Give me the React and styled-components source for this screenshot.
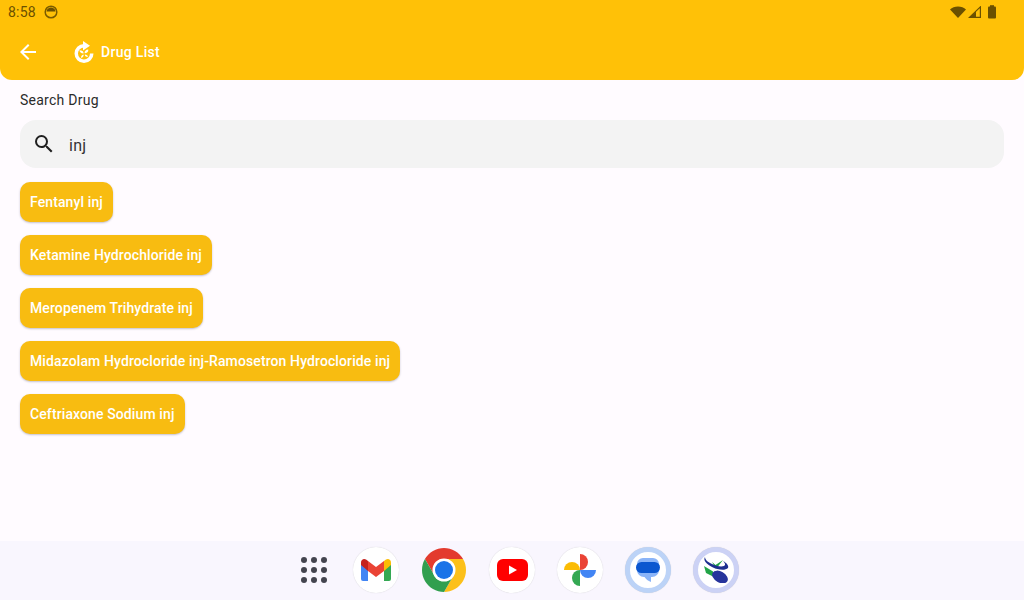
import React from "react";
import styled, { createGlobalStyle } from "styled-components";
import { MdSearch, MdArrowBack } from "react-icons/md";

const GlobalStyle = createGlobalStyle`
  html, body {
    margin: 0;
    padding: 0;
    background: #fffbff;
  }
  * {
    box-sizing: border-box;
  }
`;

const Screen = styled.div`
  width: 1024px;
  height: 600px;
  display: flex;
  flex-direction: column;
  overflow: hidden;
  background: #fffbff;
  font-family: Roboto, "Liberation Sans", sans-serif;
`;

const Header = styled.header`
  height: 80px;
  flex: none;
  display: flex;
  flex-direction: column;
  background: #ffc107;
  border-radius: 0 0 12px 12px;
`;

const StatusBar = styled.div`
  height: 24px;
  display: flex;
  align-items: center;
  padding: 0 27px 0 8px;
  color: #6b5000;
  font-size: 14px;
  letter-spacing: 0.2px;
`;

const Clock = styled.span`
  width: 36px;
`;

const StatusIcons = styled.div`
  margin-left: auto;
  display: flex;
  align-items: center;
  gap: 2px;
`;

const Toolbar = styled.div`
  height: 56px;
  display: flex;
  align-items: center;
  padding-left: 16px;
  color: #fff;
`;

const BackButton = styled.div`
  width: 57px;
  display: flex;
  font-size: 24px;
`;

const Title = styled.span`
  margin-left: 6px;
  font-size: 14px;
  font-weight: 500;
  letter-spacing: 0.3px;
`;

const Main = styled.main`
  flex: 1;
  display: flex;
  flex-direction: column;
  align-items: flex-start;
  padding: 12px 20px 0;
`;

const SearchLabel = styled.label`
  height: 16px;
  line-height: 16px;
  font-size: 14px;
  color: #2b2b2b;
  letter-spacing: 0.25px;
`;

const SearchBox = styled.div`
  width: 984px;
  height: 48px;
  margin-top: 12px;
  display: flex;
  align-items: center;
  padding-left: 12px;
  gap: 13px;
  background: #f3f3f3;
  border-radius: 16px;
  font-size: 24px;
  color: #1f1f1f;
`;

const SearchText = styled.span`
  margin-top: 2px;
  font-size: 16px;
  letter-spacing: 0.3px;
  color: #333;
`;

const DrugList = styled.div`
  margin-top: 14px;
  display: flex;
  flex-direction: column;
  align-items: flex-start;
  gap: 13px;
`;

const DrugChip = styled.div`
  height: 40px;
  display: flex;
  align-items: center;
  padding: 0 10px;
  background: #f8bc11;
  border-radius: 10px;
  box-shadow: 0 1px 2px rgba(60, 60, 90, 0.3);
  color: #fff;
  font-size: 14px;
  font-weight: 500;
  letter-spacing: 0.11px;
`;

const Dock = styled.nav`
  height: 59px;
  flex: none;
  display: flex;
  align-items: center;
  justify-content: center;
  gap: 22px;
  padding-left: 12px;
  padding-bottom: 1px;
  background: #f9f6fe;
`;

const AllApps = styled.div`
  width: 34px;
  height: 46px;
  display: grid;
  grid-template-columns: repeat(3, 6px);
  grid-auto-rows: 6px;
  gap: 4px;
  align-content: center;
  justify-content: center;
`;

const AppDot = styled.span`
  border-radius: 50%;
  background: #44444f;
`;

const AppIcon = styled.div`
  width: 46px;
  height: 46px;
  display: flex;
  align-items: center;
  justify-content: center;
  border-radius: 50%;
  background: #fff;
  border: ${(p) => (p.$ring ? `5px solid ${p.$ring}` : "none")};
  box-shadow: 0 0 1px rgba(0, 0, 0, 0.2);
`;

const BareIcon = styled.div`
  width: 46px;
  height: 46px;
  display: flex;
  align-items: center;
  justify-content: center;
`;

const drugs = [
  "Fentanyl inj",
  "Ketamine Hydrochloride inj",
  "Meropenem Trihydrate inj",
  "Midazolam Hydrocloride inj-Ramosetron Hydrocloride inj",
  "Ceftriaxone Sodium inj",
];

const FaceIcon = () => (
  <svg width="14" height="14" viewBox="0 0 14 14">
    <circle cx="7" cy="7" r="5.8" fill="none" stroke="#7a5c00" strokeWidth="1.5" />
    <path d="M2.5 6.5C3 3.5 5 2.5 7 2.5s4 1 4.500 4z" fill="#6b5000" />
  </svg>
);

const WifiIcon = () => (
  <svg width="16" height="12" viewBox="0 0 16 12">
    <path d="M0 3.4C2 1.4 4.8 0.4 8 0.4s6 1 8 3L8 12z" fill="#6b5000" />
  </svg>
);

const SignalIcon = () => (
  <svg width="13" height="12" viewBox="0 0 13 12">
    <path d="M12.4 0.9V11.4H1.400z" fill="none" stroke="#6b5000" strokeWidth="1.200" />
    <path d="M8 5.500V11.500H1.500z" fill="#6b5000" />
  </svg>
);

const BatteryIcon = () => (
  <svg width="14" height="14" viewBox="0 0 14 14">
    <rect x="5" y="1.400" width="8" height="12" rx="1" fill="#6b5000" />
    <rect x="7" y="0.200" width="4" height="2" fill="#6b5000" />
  </svg>
);

const LeafLogo = () => (
  <svg width="22" height="23" viewBox="0 0 22 23">
    <path d="M11 3a9.500 9.500 0 1 0 9.500 9.500H17a6 6 0 1 1-6-6z" fill="#fff" />
    <path d="M10 0l7 4.800-7 4.800z" fill="#fff" />
    <path d="M11.600 12.200c-.2-2.200 1-3.600 3.700-3.800.2 2.500-1.300 3.800-3.700 3.800z" fill="#fff" />
    <path d="M10.600 12.400C8 12.400 6.600 11.200 6.400 9.200c2.700 0 4.200 1 4.200 3.200z" fill="#fff" />
    <path d="M10.600 13.400c.2 1.800-.7 3-2.500 3.500-.3-1.900.7-3.100 2.500-3.500z" fill="#fff" />
    <path d="M11.800 13.400c1.800 0 3.100.9 3.300 2.400-2 .3-3.300-.7-3.300-2.400z" fill="#fff" />
  </svg>
);

const GmailIcon = () => (
  <svg width="30" height="24" viewBox="0 0 30 24">
    <path d="M0 5v16a2 2 0 0 0 2 2h5V11z" fill="#4285f4" />
    <path d="M23 11v12h5a2 2 0 0 0 2-2V5z" fill="#34a853" />
    <path d="M7 3v10l8 6 8-6V3l-8 6z" fill="#ea4335" />
    <path d="M0 4.500V7l7 6V3L5 1.500C3 0 0 1.400 0 4.500z" fill="#c5221f" />
    <path d="M23 3v10l7-6V4.500c0-3.100-3-4.500-5-3z" fill="#fbbc04" />
  </svg>
);

const ChromeIcon = () => (
  <svg width="44" height="44" viewBox="0 0 44 44">
    <path d="M2.950 11A22 22 0 0 1 41.050 11H22A11 11 0 0 0 12.470 27.500z" fill="#e33b2e" />
    <path d="M41.050 11A22 22 0 0 1 22 44L31.530 27.500A11 11 0 0 0 22 11z" fill="#fcc01a" />
    <path d="M22 44A22 22 0 0 1 2.950 11L12.470 27.500A11 11 0 0 0 31.530 27.500z" fill="#319f4f" />
    <circle cx="22" cy="22" r="11.500" fill="#fff" />
    <circle cx="22" cy="22" r="9" fill="#1a73e8" />
  </svg>
);

const YoutubeIcon = () => (
  <svg width="31" height="22" viewBox="0 0 31 22">
    <rect width="31" height="22" rx="6" fill="#ff0000" />
    <path d="M12 6.500v9l8-4.500z" fill="#fff" />
  </svg>
);

const PhotosIcon = () => (
  <svg width="32" height="32" viewBox="0 0 32 32">
    <path d="M16 16V0a8 8 0 0 1 0 16z" fill="#ea4335" />
    <path d="M16 16h16a8 8 0 0 1-16 0z" fill="#4285f4" />
    <path d="M16 16v16a8 8 0 0 1 0-16z" fill="#34a853" />
    <path d="M16 16H0a8 8 0 0 1 16 0z" fill="#fbbc04" />
  </svg>
);

const MessagesIcon = () => (
  <svg width="24" height="24" viewBox="0 0 24 24">
    <path d="M7 0h10a6 6 0 0 1 6 6v6a7 7 0 0 1-7 7h-1v5c-3-1-5-3-6.500-5H8a7 7 0 0 1-7-7V6a6 6 0 0 1 6-6z" fill="#8ab4f8" />
    <rect x="0" y="4" width="24" height="11" rx="5.500" fill="#0b57d0" />
  </svg>
);

const PharmaLogo = () => (
  <svg width="26" height="26" viewBox="0 0 26 26">
    <path d="M1 9l9 5.500 0 5L3 16z" fill="#22a447" />
    <path d="M9 5l3.500 3L20 3l-7 9z" fill="#22a447" />
    <path d="M2 0c-2 3 1 7 7 10 6 3 13 4 16 1 1-2-1-5-5-7 2 2 3 4 1 5-3 1-8 0-12-2C5 5 2 3 2 0z" fill="#1c2f8f" />
    <ellipse cx="17" cy="20" rx="8.500" ry="5.500" transform="rotate(30 17 20)" fill="#26349c" />
  </svg>
);

const App = () => {
  return (
    <Screen>
      <GlobalStyle />
      <Header>
        <StatusBar>
          <Clock>8:58</Clock>
          <FaceIcon />
          <StatusIcons>
            <WifiIcon />
            <SignalIcon />
            <BatteryIcon />
          </StatusIcons>
        </StatusBar>
        <Toolbar>
          <BackButton>
            <MdArrowBack />
          </BackButton>
          <LeafLogo />
          <Title>Drug List</Title>
        </Toolbar>
      </Header>
      <Main>
        <SearchLabel>Search Drug</SearchLabel>
        <SearchBox>
          <MdSearch />
          <SearchText>inj</SearchText>
        </SearchBox>
        <DrugList>
          {drugs.map((d) => (
            <DrugChip key={d}>{d}</DrugChip>
          ))}
        </DrugList>
      </Main>
      <Dock>
        <AllApps>
          {Array.from({ length: 9 }).map((_, i) => (
            <AppDot key={i} />
          ))}
        </AllApps>
        <AppIcon>
          <GmailIcon />
        </AppIcon>
        <BareIcon>
          <ChromeIcon />
        </BareIcon>
        <AppIcon>
          <YoutubeIcon />
        </AppIcon>
        <AppIcon>
          <PhotosIcon />
        </AppIcon>
        <AppIcon $ring="#bcd3f7">
          <MessagesIcon />
        </AppIcon>
        <AppIcon $ring="#ccd2f5">
          <PharmaLogo />
        </AppIcon>
      </Dock>
    </Screen>
  );
};

export default App;
